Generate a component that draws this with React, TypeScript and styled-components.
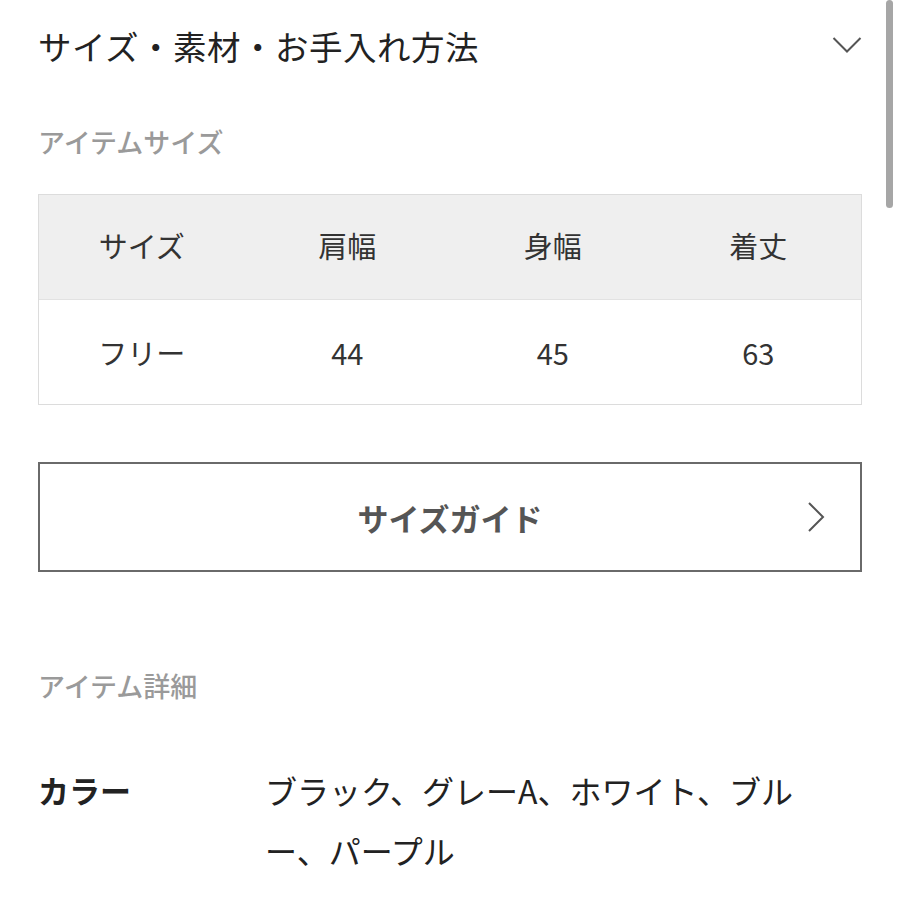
import React from "react";
import styled, { createGlobalStyle } from "styled-components";

const Global = createGlobalStyle`
  html, body { margin: 0; padding: 0; background: #fff; }
  body { font-family: "Noto Sans CJK JP", "Noto Sans", sans-serif; color: #222; }
`;

const Page = styled.div`
  position: relative;
  width: 900px;
  height: 900px;
  overflow: hidden;
  padding: 0 38px;
  box-sizing: border-box;
`;

const ScrollThumb = styled.div`
  position: absolute;
  right: 7px;
  top: 0;
  width: 7px;
  height: 208px;
  border-radius: 4px;
  background: #a6a6a6;
`;

const AccordionHeader = styled.div`
  height: 90px;
  display: flex;
  align-items: center;
  justify-content: space-between;
`;

const Title = styled.h2`
  margin: 0;
  font-size: 33.5px;
  font-weight: 400;
  color: #222;
  letter-spacing: 0.5px;
`;

const SectionLabel = styled.div<{ $top: number; $height: number }>`
  margin-top: ${(p) => p.$top}px;
  height: ${(p) => p.$height}px;
  display: flex;
  align-items: center;
  font-size: 27px;
  font-weight: 500;
  color: #9a9a9a;
`;

const Table = styled.div`
  margin-top: 32px;
  border: 1px solid #dcdcdc;
  display: grid;
  grid-template-columns: repeat(4, 1fr);
`;

const Cell = styled.div<{ $head?: boolean }>`
  height: ${(p) => (p.$head ? 105 : 104)}px;
  display: flex;
  align-items: center;
  justify-content: center;
  padding-bottom: ${(p) => (p.$head ? 4 : 0)}px;
  box-sizing: border-box;
  background: ${(p) => (p.$head ? "#efefef" : "#fff")};
  border-bottom: ${(p) => (p.$head ? "1px solid #e2e2e2" : "none")};
  font-size: 29px;
  color: #333;
`;

const GuideButton = styled.div`
  margin-top: 57px;
  height: 106px;
  border: 2px solid #6a6a6a;
  display: flex;
  align-items: center;
  justify-content: center;
  position: relative;
  font-size: 31px;
  font-weight: 700;
  color: #555;
`;

const ArrowWrap = styled.span`
  position: absolute;
  right: 34px;
  top: 50%;
  transform: translateY(-50%);
  display: flex;
`;

const DetailRow = styled.div`
  margin-top: 54px;
  display: grid;
  grid-template-columns: 227px 545px;
`;

const DetailKey = styled.div`
  font-size: 31px;
  font-weight: 700;
  line-height: 60px;
  color: #222;
`;

const DetailValue = styled.div`
  font-size: 32px;
  line-height: 60px;
  color: #222;
  line-break: anywhere;
`;

const ChevronDown = () => (
  <svg width="30" height="18" viewBox="0 0 30 18" fill="none">
    <path d="M1.5 2 L15 15.5 L28.5 2" stroke="#555" strokeWidth="2" />
  </svg>
);

const ChevronRight = () => (
  <svg width="20" height="32" viewBox="0 0 20 32" fill="none">
    <path d="M3 2 L17 16 L3 30" stroke="#555" strokeWidth="2" />
  </svg>
);

const heads = ["サイズ", "肩幅", "身幅", "着丈"];
const vals = ["フリー", "44", "45", "63"];

export default function App() {
  return (
    <>
      <Global />
      <Page>
        <ScrollThumb />
        <AccordionHeader>
          <Title>サイズ・素材・お手入れ方法</Title>
          <ChevronDown />
        </AccordionHeader>
        <SectionLabel $top={30} $height={42}>アイテムサイズ</SectionLabel>
        <Table>
          {heads.map((h) => (
            <Cell $head key={h}>{h}</Cell>
          ))}
          {vals.map((v) => (
            <Cell key={v}>{v}</Cell>
          ))}
        </Table>
        <GuideButton>
          サイズガイド
          <ArrowWrap>
            <ChevronRight />
          </ArrowWrap>
        </GuideButton>
        <SectionLabel $top={92} $height={42}>アイテム詳細</SectionLabel>
        <DetailRow>
          <DetailKey>カラー</DetailKey>
          <DetailValue>ブラック、グレーA、ホワイト、ブルー、パープル</DetailValue>
        </DetailRow>
      </Page>
    </>
  );
}
